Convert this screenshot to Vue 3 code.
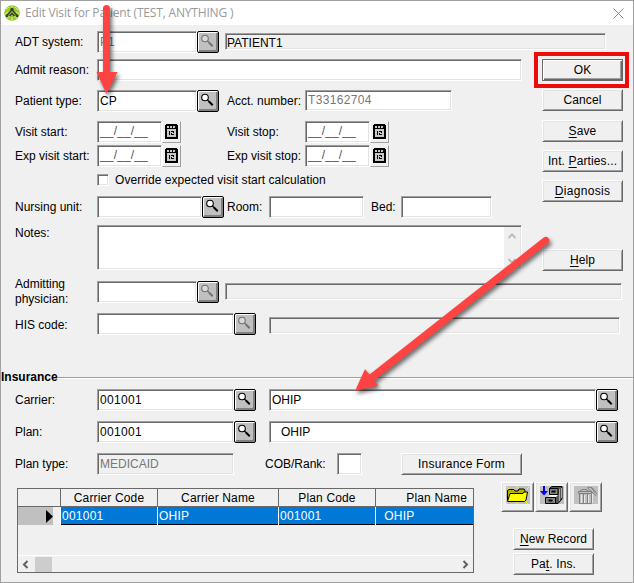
<script setup>
const columns = ['Carrier Code', 'Carrier Name', 'Plan Code', 'Plan Name']
const record = ['001001', 'OHIP', '001001', '\u00a0\u00a0OHIP']
const visitDates = [
  { start: 'Visit start:', stop: 'Visit stop:' },
  { start: 'Exp visit start:', stop: 'Exp visit stop:' },
]
</script>

<template>
  <div class="window">
    <svg class="defs" width="0" height="0" aria-hidden="true">
      <symbol id="mag" viewBox="0 0 18 18">
        <circle cx="6" cy="5.500" r="3.300" class="lens" />
        <path d="M8.500 8L10.500 10" class="neck" />
        <path d="M10 9.500L13.700 13.300" class="handle" />
      </symbol>
      <symbol id="cal" viewBox="0 0 13 15">
        <path d="M0 1h1V0h11v1h1v14H0z" fill="#000" />
        <path d="M2 2h2v2H2zM5 2h2v2H5zM8 2h2v2H8zM2 5h9v8H2z" fill="#c8c8c8" />
        <path d="M4 7h1v4H4zM6 7h3v2H7v1h2v1H6V9h2V8H6z" fill="#000" />
      </symbol>
    </svg>

    <header class="titlebar">
      <svg class="logo" width="16" height="16" viewBox="0 0 16 16">
        <circle cx="8" cy="8" r="7.800" fill="#9bcb2d" />
        <path d="M2 4l3-2M11 2l3 3M1 9l3-2M12 7l3 2M3 13l3-2M10 11l3 2M8 1v3M8 12v3" stroke="#d9f08f" stroke-width="1" />
        <path d="M2.500 11L8 4.800l5.500 6.200M5.500 11L8 8.500l2.500 2.500" fill="none" stroke="#383c36" stroke-width="1.500" />
        <circle cx="8" cy="4.500" r="1.700" fill="#383c36" />
        <circle cx="3" cy="10.800" r="1.400" fill="#383c36" />
        <circle cx="13" cy="10.800" r="1.400" fill="#383c36" />
      </svg>
      <span class="title">Edit Visit for Patient (TEST, ANYTHING )</span>
      <svg class="close" width="11" height="11" viewBox="0 0 11 11"><path d="M.5 .5l10 10M10.500 .5l-10 10" stroke="#8c8c8c" /></svg>
    </header>

    <div class="row adt">
      <label class="lbl">ADT system:</label>
      <div class="field w100 muted">P1</div>
      <button class="mag off"><svg width="18" height="18"><use href="#mag" /></svg></button>
      <div class="field ro name">PATIENT1</div>
    </div>

    <div class="upper">
      <div class="form">
        <div class="row admit"><label class="lbl">Admit reason:</label><div class="field wide"></div></div>
        <div class="row ptype">
          <label class="lbl">Patient type:</label>
          <div class="field w100">CP</div>
          <button class="mag"><svg width="18" height="18"><use href="#mag" /></svg></button>
          <label class="lbl mid">Acct. number:</label>
          <div class="field acct muted num">T33162704</div>
        </div>
        <div v-for="d in visitDates" :key="d.start" class="row date">
          <label class="lbl">{{ d.start }}</label>
          <div class="field datebox">__/__/__</div>
          <button class="cal"><svg width="13" height="15"><use href="#cal" /></svg></button>
          <label class="lbl stop">{{ d.stop }}</label>
          <div class="field datebox">__/__/__</div>
          <button class="cal"><svg width="13" height="15"><use href="#cal" /></svg></button>
        </div>
        <div class="override"><span class="check"></span><label>Override expected visit start calculation</label></div>
        <div class="row nursing">
          <label class="lbl">Nursing unit:</label>
          <div class="field unit"></div>
          <button class="mag"><svg width="18" height="18"><use href="#mag" /></svg></button>
          <label class="lbl room">Room:</label>
          <div class="field roombox"></div>
          <label class="lbl bed">Bed:</label>
          <div class="field bedbox"></div>
        </div>
        <div class="row notes">
          <label class="lbl">Notes:</label>
          <div class="field area">
            <div class="vscroll">
              <svg width="8" height="6" viewBox="0 0 8 6"><path d="M.5 5L4 1.500 7.500 5" /></svg>
              <svg width="8" height="6" viewBox="0 0 8 6"><path d="M.5 1L4 4.500 7.500 1" /></svg>
            </div>
          </div>
        </div>
      </div>
      <div class="actions">
        <button class="btn default">OK</button>
        <button class="btn cancel">Cancel</button>
        <button class="btn save"><span><u>S</u>ave</span></button>
        <button class="btn parties"><span>Int. <u>P</u>arties...</span></button>
        <button class="btn diag"><span><u>D</u>iagnosis</span></button>
        <button class="btn help"><span><u>H</u>elp</span></button>
      </div>
    </div>

    <div class="row admitting">
      <label class="lbl two">Admitting<br>physician:</label>
      <div class="field w100"></div>
      <button class="mag off"><svg width="18" height="18"><use href="#mag" /></svg></button>
      <div class="field ro phys"></div>
    </div>
    <div class="row his">
      <label class="lbl">HIS code:</label>
      <div class="field code"></div>
      <button class="mag off"><svg width="18" height="18"><use href="#mag" /></svg></button>
      <div class="field ro hisname"></div>
    </div>

    <div class="section"><b>Insurance</b><i></i></div>

    <div class="row carrier">
      <label class="lbl">Carrier:</label>
      <div class="field code num">001001</div>
      <button class="mag"><svg width="18" height="18"><use href="#mag" /></svg></button>
      <div class="field long">OHIP</div>
      <button class="mag"><svg width="18" height="18"><use href="#mag" /></svg></button>
    </div>
    <div class="row plan">
      <label class="lbl">Plan:</label>
      <div class="field code num">001001</div>
      <button class="mag"><svg width="18" height="18"><use href="#mag" /></svg></button>
      <div class="field long indent">OHIP</div>
      <button class="mag"><svg width="18" height="18"><use href="#mag" /></svg></button>
    </div>
    <div class="row plan">
      <label class="lbl">Plan type:</label>
      <div class="field code grey muted">MEDICAID</div>
      <label class="lbl cob">COB/Rank:</label>
      <div class="field rank"></div>
      <button class="btn insform">Insurance Form</button>
    </div>

    <div class="lower">
      <div class="grid">
        <div class="tr head"><span></span><span v-for="c in columns" :key="c">{{ c }}</span></div>
        <div class="tr rec">
          <span class="mark"><svg width="7" height="13" viewBox="0 0 7 13"><path d="M0 0l7 6.500L0 13z" /></svg></span>
          <span v-for="(v, i) in record" :key="i">{{ v }}</span>
        </div>
        <div class="hscroll">
          <svg width="7" height="9" viewBox="0 0 7 9"><path d="M5.500 1L2 4.500 5.500 8" /></svg>
          <span class="thumb"></span>
          <svg class="right" width="7" height="9" viewBox="0 0 7 9"><path d="M1.500 1L5 4.500 1.500 8" /></svg>
        </div>
      </div>
      <div class="side">
        <div class="tools">
          <button class="tool">
            <svg width="24" height="19" viewBox="0 0 24 19">
              <path d="M0 0h24v18H0z" fill="#c0c0c0" />
              <path d="M1 1l2 2M11 0v2M23 1l-2 2M0 18l2-2M11 18v-2M22 18l-2-2" stroke="#ff0" />
              <path d="M1.500 14.500v-10l1.500-1h5l1 1.500h3l1-2h5l1 1.500v3" fill="#b5b500" stroke="#000" />
              <path d="M1.500 15.500L4 7.500h13l1-1.500h3.500L20 14l-1.500 1.500z" fill="#ff0" stroke="#000" />
            </svg>
          </button>
          <button class="tool">
            <svg width="24" height="19" viewBox="0 0 24 19">
              <path d="M0 0h24v18H0z" fill="#c0c0c0" />
              <path d="M3 0h2v5h3L4 9.500 0 5h3z" fill="#0000f0" />
              <path d="M9.500 2.500L12 .5h10v12.500l-4 4.500h-3V8.500H9.500z" fill="#555" stroke="#000" />
              <path d="M9.500 2.500h8.500v6H9.500zM5.500 11.500h10v6h-10z" fill="#858585" stroke="#000" />
              <path d="M8 10.500l2-1.500h8l-2 2z" fill="#fff" />
              <path d="M11.500 5.500h4M8.500 14.500h4" stroke="#000" stroke-width="2" />
              <path d="M19.500 3v12M21.500 2v10" stroke="#aaa" />
            </svg>
          </button>
          <button class="tool">
            <svg width="24" height="19" viewBox="0 0 24 19">
              <path d="M0 0h24v18H0z" fill="#c0c0c0" />
              <path d="M7.500 9v8M10.500 9v8M14.500 9v8M18.500 8v9M6 18.500h11" stroke="#e8e8e8" />
              <path d="M4.500 5.500h13v2h-13zM5.500 8v9.500h12V8M9.500 8v9M13.500 8v9M6 5l2-1.500h4l3 2M13 1.500l9.500 8.500M14 1.500c4-1 7 2 9 7M17 1l4 6" fill="none" stroke="#808080" />
            </svg>
          </button>
        </div>
        <button class="btn newrec"><span><u>N</u>ew Record</span></button>
        <button class="btn patins"><span>Pa<u>t</u>. Ins.</span></button>
      </div>
    </div>

    <div class="callout"></div>
    <svg class="arrows" width="634" height="583" viewBox="0 0 634 583">
      <path d="M103 8.500a3.500 3.500 0 0 1 7 0V72h7.500L106.500 94 96.500 72H103z" />
      <path d="M543.400 237.800a3.500 3.500 0 0 1 4.800 5.100L374.300 380.500 378 385.500 355 391 365 369 369.500 374.500z" />
    </svg>
  </div>
</template>

<style>
body { margin: 0; overflow: hidden; }
</style>

<style scoped>
* { box-sizing: border-box; }
.window {
  position: relative; width: 634px; height: 583px; background: #f0f0f0;
  border: 1px solid #a0a0a0; overflow: hidden;
  font: 12px/14px "Liberation Sans", Arial, sans-serif; color: #000;
}
.defs { position: absolute; }
button { font: inherit; color: inherit; padding: 0; margin: 0; flex: none; display: flex; align-items: center; justify-content: center; }
.titlebar { height: 24px; background: #fff; display: flex; align-items: center; padding: 0 9px 0 3px; }
.title { font: 12px/16px "Open Sans", "Noto Sans", sans-serif; letter-spacing: -.18px; color: #999; margin-left: 5px; flex: 1; white-space: nowrap; }
.row { display: flex; align-items: flex-start; height: 22px; padding-left: 14px; }
.lbl { width: 82px; flex: none; padding-top: 4px; white-space: nowrap; }
.field {
  flex: none; height: 22px; background: #fff; padding: 3px 2px 0; white-space: pre; line-height: 15px;
  border: 1px solid; border-color: #a0a0a0 #fff #fff #a0a0a0;
  box-shadow: inset 1px 1px #696969, inset -1px -1px #e3e3e3;
}
.num { letter-spacing: .33px; }
.muted { color: #777; }
.ro { background: #f0f0f0; height: 17px; padding: 1px; }
.grey { background: #f0f0f0; }
.w100 { width: 100px; }
.mag {
  width: 22px; height: 22px; background: #c0c0c0; border: 1px solid #000; border-radius: 2px;
  box-shadow: inset 1px 1px #fff, inset -2px -2px #808080;
}
.mag svg { fill: none; }
.lens { fill: #fff; stroke: #000; stroke-width: 1.1; }
.neck { stroke: #000; stroke-width: 1.2; }
.handle { stroke: #000; stroke-width: 2; }
.off svg { opacity: .4; }
.adt { margin-top: 6px; }
.name { width: 381px; margin: 2px 0 0 6px; padding-top: 2px; }
.upper { display: flex; margin-top: 6px; height: 211px; }
.form { width: 541px; }
.wide { width: 425px; }
.ptype { margin-top: 9px; }
.mid { margin-left: 8px; width: 78px; }
.acct { width: 147px; height: 21px; padding-top: 2px; }
.date { margin-top: 9px; }
.date + .date { margin-top: 2px; }
.datebox { width: 65px; color: #555; letter-spacing: .15px; padding-top: 2px; }
.cal { width: 19px; height: 22px; background: #f0f0f0; border: 1px solid; border-color: #f0f0f0 #a0a0a0 #a0a0a0 #fff; padding: 0 1px 1px 0; }
.stop { margin-left: 46px; width: 78px; }
.override { display: flex; align-items: center; height: 14px; margin: 6px 0 0 96px; gap: 6px; letter-spacing: .05px; }
.check { width: 12px; height: 12px; background: #fff; border: 1px solid; border-color: #a0a0a0 #fff #fff #a0a0a0; box-shadow: inset 1px 1px #696969, inset -1px -1px #e3e3e3; }
.nursing { margin-top: 9px; }
.unit { width: 105px; }
.room { margin-left: 3px; width: 42px; }
.roombox { width: 95px; }
.bed { margin-left: 7px; width: 30px; }
.bedbox { width: 91px; }
.notes { margin-top: 7px; height: 45px; }
.notes .lbl { padding-top: 1px; }
.area { width: 425px; height: 45px; display: flex; justify-content: flex-end; padding: 1px; }
.vscroll { width: 16px; background: #f0f0f0; display: flex; flex-direction: column; align-items: center; justify-content: space-between; padding: 6px 0 4px; }
.vscroll svg { fill: none; stroke: #bcbcbc; stroke-width: 2; }
.actions { width: 81px; display: flex; flex-direction: column; }
.btn {
  width: 81px; height: 22px; background: #f0f0f0; border: 1px solid; border-color: #fff #696969 #696969 #fff;
  box-shadow: inset 1px 1px #e3e3e3, inset -1px -1px #a0a0a0; letter-spacing: .12px;
}
.btn u { text-underline-offset: 2px; }
.default { border-color: #696969; box-shadow: inset 1px 1px #fff, inset -1px -1px #696969, inset -2px -2px #a0a0a0; }
.cancel { margin-top: 8px; }
.save { margin-top: 9px; }
.parties, .diag { margin-top: 8px; }
.diag { letter-spacing: .3px; }
.help { margin-top: 47px; }
.admitting { margin-top: 11px; }
.two { line-height: 15px; padding-top: 0; margin-top: -4px; }
.phys { width: 397px; margin: 2px 0 0 6px; }
.his { margin-top: 10px; }
.his .lbl { padding-top: 5px; }
.code { width: 137px; }
.hisname { width: 351px; margin: 4px 0 0 13px; }
.section { display: flex; align-items: center; height: 14px; margin-top: 35px; }
.section i { flex: 1; height: 2px; margin-top: 2px; background: #a0a0a0; border-bottom: 1px solid #fff; }
.carrier { margin-top: 5px; }
.long { width: 327px; margin-left: 13px; }
.indent { padding-left: 11px; }
.plan { margin-top: 10px; }
.cob { margin-left: 31px; width: 72px; }
.rank { width: 25px; }
.insform { width: 121px; margin-left: 39px; letter-spacing: .2px; }
.lower { display: flex; align-items: flex-start; padding-left: 16px; }
.grid { width: 457px; height: 85px; margin-top: 13px; border: 1px solid #696969; display: flex; flex-direction: column; }
.tr { display: grid; grid-template-columns: 42px 97px 121px 97px 1fr; height: 18px; }
.head { border-bottom: 1px solid #696969; letter-spacing: .15px; }
.head span { text-align: center; line-height: 18px; border-left: 1px solid #696969; white-space: nowrap; }
.head span:first-child { border: 0; }
.head span:last-child { text-align: right; padding-right: 6px; }
.rec { background: #0078d7; color: #fff; border-bottom: 1px solid #000; letter-spacing: .25px; }
.rec span { border-left: 1px solid #fff; padding-left: 1px; line-height: 18px; }
.rec .mark { background: #c0c0c0; border: 0; border-right: 7px solid #f0f0f0; display: flex; align-items: center; justify-content: flex-end; }
.hscroll { margin-top: auto; border-top: 1px solid #fff; height: 17px; display: flex; align-items: center; padding: 0 4px; }
.hscroll svg { fill: none; stroke: #606060; stroke-width: 2; }
.thumb { width: 17px; height: 15px; background: #cdcdcd; margin-left: 6px; }
.right { margin-left: auto; }
.side { margin: 7px 0 0 27px; }
.tools { display: flex; gap: 1px; }
.tool { width: 33px; height: 30px; background: #f0f0f0; border: 1px solid; border-color: #fff #696969 #696969 #fff; box-shadow: inset 1px 1px #e3e3e3, inset -1px -1px #a0a0a0; padding-bottom: 3px; }
.newrec { margin: 16px 0 0 12px; }
.patins { margin: 3px 0 0 12px; }
.callout { position: absolute; left: 533px; top: 51px; width: 95px; height: 36px; border: 4px solid #ed0c0c; }
.arrows { position: absolute; left: -1px; top: -1px; fill: #fe4343; filter: drop-shadow(2px 3px 2px rgba(0, 0, 0, .55)); }
</style>
